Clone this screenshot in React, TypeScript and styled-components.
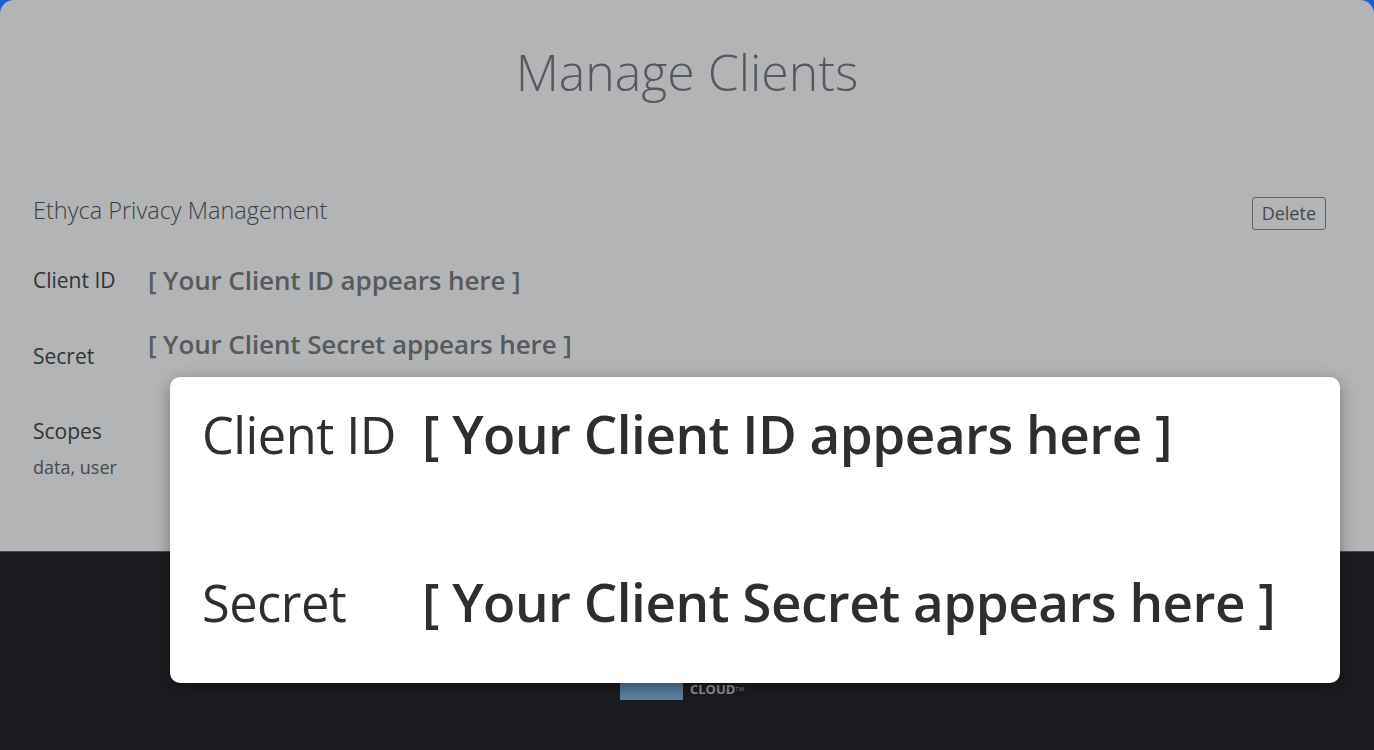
import React from "react";
import styled, { createGlobalStyle } from "styled-components";

const Global = createGlobalStyle`
  html, body { margin: 0; padding: 0; background: #1a5fd0; }
  body { font-family: "Open Sans", "Noto Sans", sans-serif; }
  * { box-sizing: border-box; }
`;

const Page = styled.div`
  position: relative;
  width: 1374px;
  height: 750px;
  border-radius: 14px 14px 0 0;
  overflow: hidden;
  display: flex;
  flex-direction: column;
`;

const Main = styled.main`
  height: 551px;
  flex-shrink: 0;
  background: #b3b4b6;
  padding: 40px 48px 0 33px;
  display: flex;
  flex-direction: column;
`;

const Title = styled.h1`
  margin: 0;
  text-align: center;
  font-family: "Open Sans", sans-serif;
  font-weight: 300;
  font-size: 50px;
  line-height: 64px;
  color: #55585c;
  padding-left: 15px;
`;

const ClientHeader = styled.div`
  display: flex;
  justify-content: space-between;
  align-items: flex-start;
  margin-top: 86px;
`;

const ClientName = styled.div`
  font-weight: 300;
  font-size: 23.5px;
  color: #3c3e42;
  padding-top: 4px;
`;

const DeleteButton = styled.button`
  font-family: "Open Sans", sans-serif;
  font-size: 18px;
  color: #46484c;
  background: transparent;
  border: 1px solid #5e6064;
  border-radius: 3px;
  padding: 3px 9px 4px;
  margin-top: 7px;
  margin-right: 0;
`;

const FieldRow = styled.div<{ $align: string; $mt: number }>`
  display: flex;
  align-items: ${(p) => p.$align};
  margin-top: ${(p) => p.$mt}px;
`;

const FieldLabel = styled.div<{ $shift?: number }>`
  width: 115px;
  font-size: 21px;
  color: #303236;
  padding-top: ${(p) => p.$shift ?? 0}px;
`;

const FieldValue = styled.div`
  font-family: "Open Sans", sans-serif;
  font-weight: 600;
  font-size: 26px;
  letter-spacing: -0.1px;
  color: #58595d;
`;

const Scopes = styled.div`
  margin-top: 47px;
  display: flex;
  flex-direction: column;
  gap: 10px;
`;

const ScopesTitle = styled.div`
  font-size: 21px;
  color: #303236;
`;

const ScopesList = styled.div`
  font-size: 18px;
  color: #46484c;
`;

const Footer = styled.footer`
  flex: 1;
  background: #1b1c1f;
  border-top: 1px solid #4a4b4e;
  display: flex;
  justify-content: center;
  align-items: flex-start;
  padding-top: 100px;
`;

const Logo = styled.div`
  display: flex;
  align-items: flex-end;
  gap: 7px;
  margin-left: -10px;
`;

const LogoMark = styled.div`
  width: 63px;
  height: 48px;
  background: linear-gradient(180deg, #3f5b74 0%, #5e84a6 100%);
`;

const LogoText = styled.div`
  font-family: "Open Sans", sans-serif;
  font-weight: 700;
  font-size: 13px;
  line-height: 16px;
  color: #8e9094;
  margin-bottom: 3px;
  sup { font-size: 6px; font-weight: 400; vertical-align: top; }
`;

const ZoomCard = styled.div`
  position: absolute;
  left: 170px;
  top: 377px;
  width: 1170px;
  height: 306px;
  background: #ffffff;
  border-radius: 10px;
  box-shadow: 0 4px 16px rgba(0, 0, 0, 0.35);
  padding: 20px 0 0 32px;
  display: flex;
  flex-direction: column;
`;

const ZoomRow = styled.div<{ $mt: number }>`
  display: flex;
  align-items: baseline;
  margin-top: ${(p) => p.$mt}px;
`;

const ZoomLabel = styled.div`
  width: 220px;
  font-family: "Open Sans", sans-serif;
  font-size: 50.5px;
  color: #2f2f2f;
  letter-spacing: -0.5px;
`;

const ZoomValue = styled.div`
  font-family: "Open Sans", sans-serif;
  font-weight: 600;
  font-size: 53px;
  letter-spacing: -0.5px;
  color: #2e2e2e;
`;

export default function App() {
  return (
    <>
      <Global />
      <Page>
        <Main>
          <Title>Manage Clients</Title>
          <ClientHeader>
            <ClientName>Ethyca Privacy Management</ClientName>
            <DeleteButton>Delete</DeleteButton>
          </ClientHeader>
          <FieldRow $align="center" $mt={32}>
            <FieldLabel>Client ID</FieldLabel>
            <FieldValue>[ Your Client ID appears here ]</FieldValue>
          </FieldRow>
          <FieldRow $align="flex-start" $mt={28}>
            <FieldLabel $shift={16}>Secret</FieldLabel>
            <FieldValue>[ Your Client Secret appears here ]</FieldValue>
          </FieldRow>
          <Scopes>
            <ScopesTitle>Scopes</ScopesTitle>
            <ScopesList>data, user</ScopesList>
          </Scopes>
        </Main>
        <Footer>
          <Logo>
            <LogoMark />
            <LogoText>
              CLOUD<sup>TM</sup>
            </LogoText>
          </Logo>
        </Footer>
        <ZoomCard>
          <ZoomRow $mt={0}>
            <ZoomLabel>Client ID</ZoomLabel>
            <ZoomValue>[ Your Client ID appears here ]</ZoomValue>
          </ZoomRow>
          <ZoomRow $mt={95}>
            <ZoomLabel>Secret</ZoomLabel>
            <ZoomValue>[ Your Client Secret appears here ]</ZoomValue>
          </ZoomRow>
        </ZoomCard>
      </Page>
    </>
  );
}
